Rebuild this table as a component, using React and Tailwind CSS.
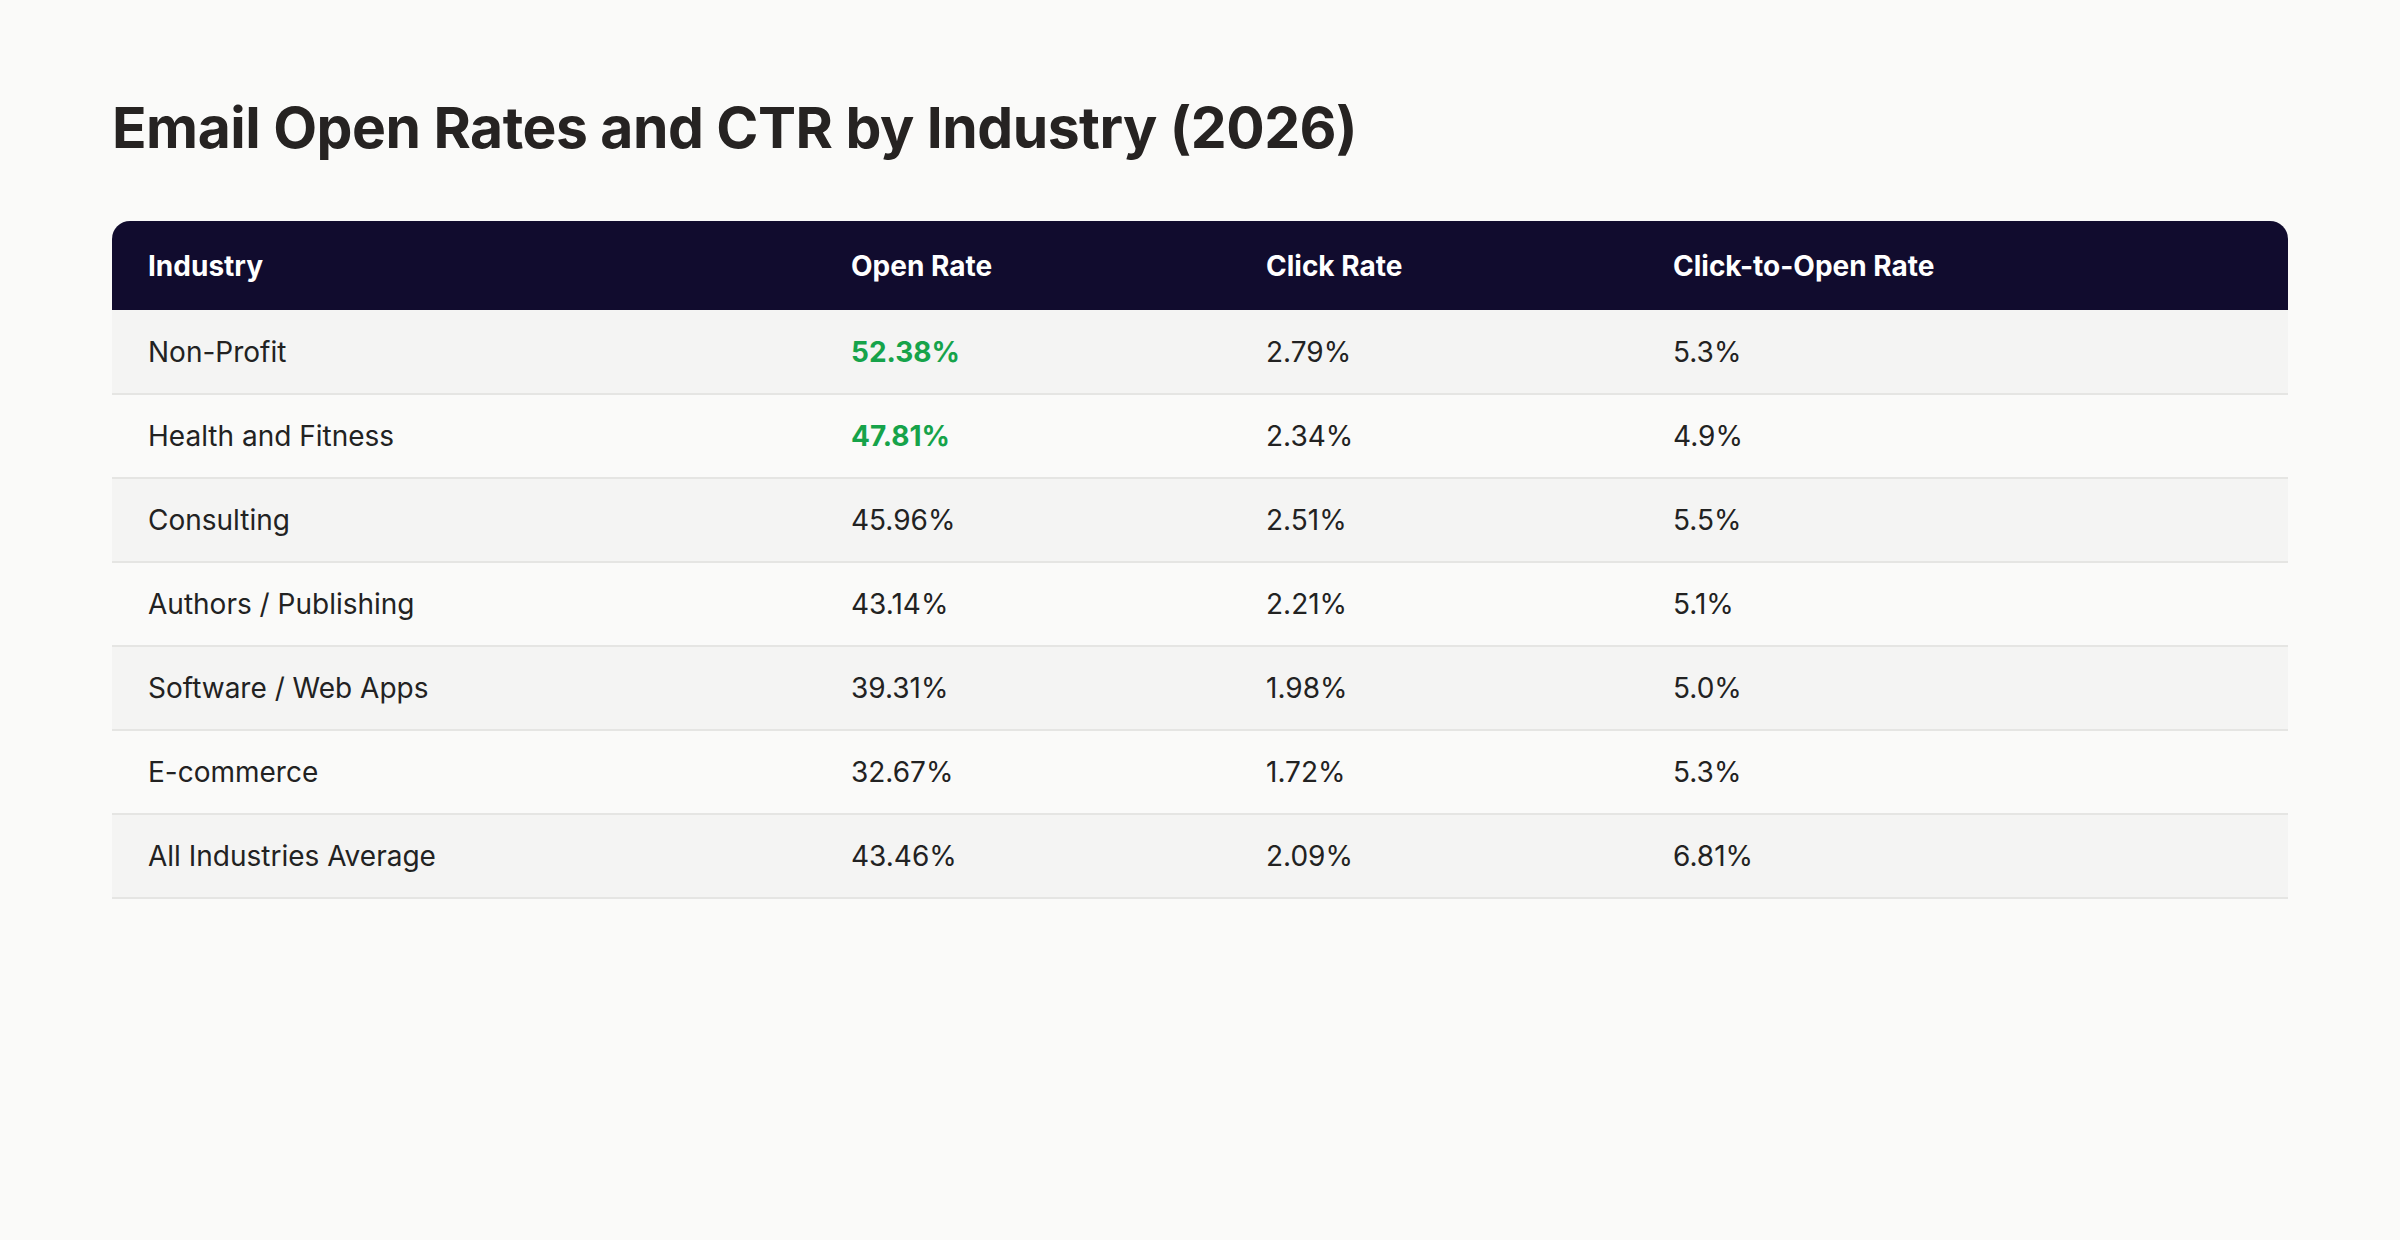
import React from "react";

const rows = [
  { name: "Non-Profit", open: "52.38%", click: "2.79%", cto: "5.3%", hi: true },
  { name: "Health and Fitness", open: "47.81%", click: "2.34%", cto: "4.9%", hi: true },
  { name: "Consulting", open: "45.96%", click: "2.51%", cto: "5.5%" },
  { name: "Authors / Publishing", open: "43.14%", click: "2.21%", cto: "5.1%" },
  { name: "Software / Web Apps", open: "39.31%", click: "1.98%", cto: "5.0%" },
  { name: "E-commerce", open: "32.67%", click: "1.72%", cto: "5.3%" },
  { name: "All Industries Average", open: "43.46%", click: "2.09%", cto: "6.81%" },
];

export default function App() {
  return (
    <div
      className="min-h-screen bg-[#fafaf9] text-[#222222] px-[112px] pt-[94px]"
      style={{ fontFamily: "Inter, 'Noto Sans', sans-serif" }}
    >
      <h1 className="text-[57px] font-bold tracking-[-0.5px] text-[#262322] leading-[1.2]">
        Email Open Rates and CTR by Industry (2026)
      </h1>

      <table className="mt-[59px] w-full border-collapse text-left">
        <thead>
          <tr className="bg-[#110c2e] text-white text-[28px] font-bold">
            <th className="w-[739px] h-[89px] pl-[36px] rounded-tl-[18px] font-bold">Industry</th>
            <th className="w-[415px] font-bold">Open Rate</th>
            <th className="w-[407px] font-bold">Click Rate</th>
            <th className="rounded-tr-[18px] font-bold">Click-to-Open Rate</th>
          </tr>
        </thead>
        <tbody className="text-[28px]">
          {rows.map((r, i) => (
            <tr
              key={r.name}
              className={
                (i % 2 === 0 ? "bg-[#f4f4f3]" : "bg-[#fafaf9]") +
                " border-b-2 border-[#e5e5e3]"
              }
            >
              <td className="h-[84px] pl-[36px]">{r.name}</td>
              <td className={r.hi ? "text-[#16a34a] font-bold" : ""}>{r.open}</td>
              <td>{r.click}</td>
              <td>{r.cto}</td>
            </tr>
          ))}
        </tbody>
      </table>
    </div>
  );
}
